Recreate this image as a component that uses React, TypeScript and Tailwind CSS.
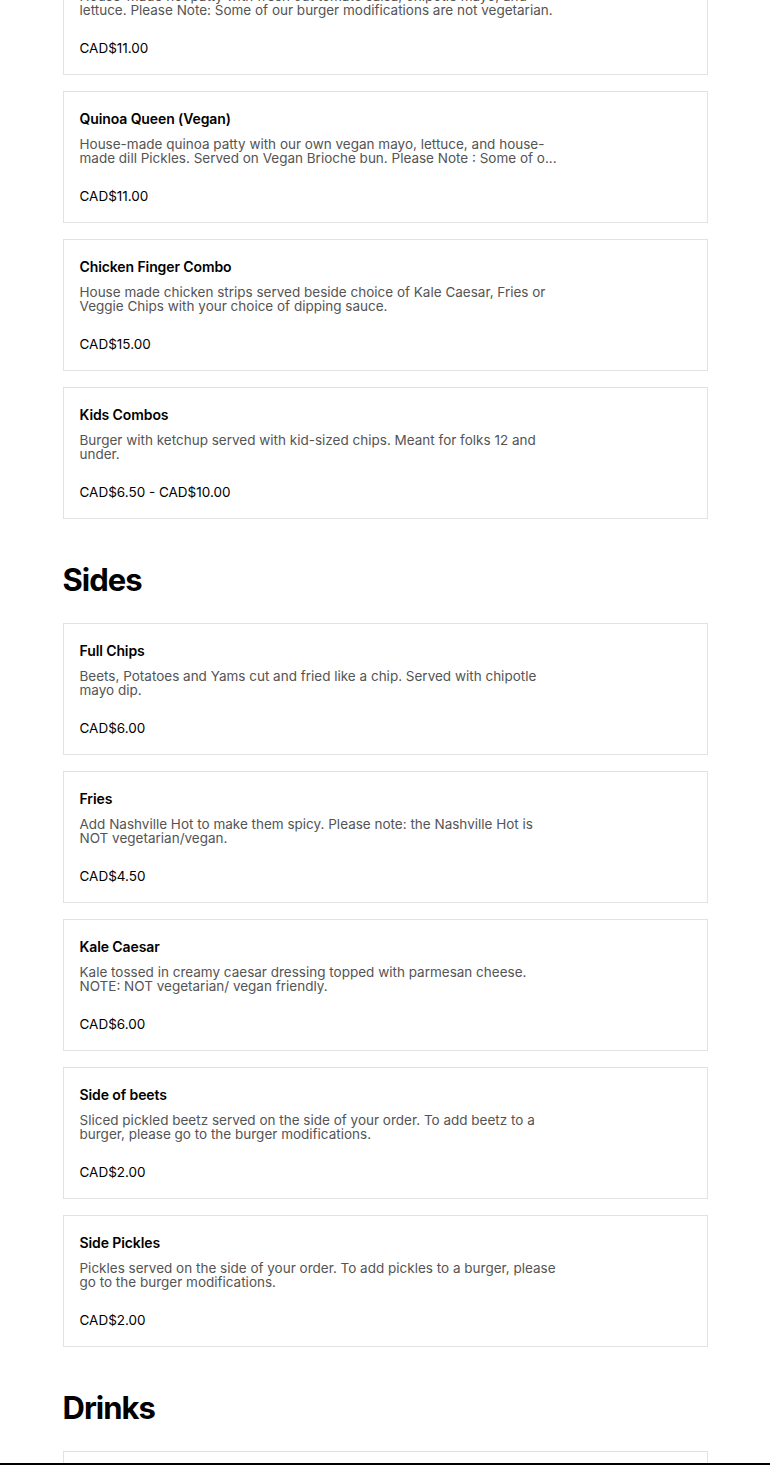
import React from "react";

type Item = { name: string; lines: string[]; price: string };

const burgers: Item[] = [
  {
    name: "Hot Damn Burger",
    lines: [
      "House-made hot patty with fresh cut tomato salsa, chipotle mayo, and",
      "lettuce. Please Note: Some of our burger modifications are not vegetarian.",
    ],
    price: "CAD$11.00",
  },
  {
    name: "Quinoa Queen (Vegan)",
    lines: [
      "House-made quinoa patty with our own vegan mayo, lettuce, and house-",
      "made dill Pickles. Served on Vegan Brioche bun. Please Note : Some of o...",
    ],
    price: "CAD$11.00",
  },
  {
    name: "Chicken Finger Combo",
    lines: [
      "House made chicken strips served beside choice of Kale Caesar, Fries or",
      "Veggie Chips with your choice of dipping sauce.",
    ],
    price: "CAD$15.00",
  },
  {
    name: "Kids Combos",
    lines: ["Burger with ketchup served with kid-sized chips. Meant for folks 12 and", "under."],
    price: "CAD$6.50 - CAD$10.00",
  },
];

const sides: Item[] = [
  {
    name: "Full Chips",
    lines: ["Beets, Potatoes and Yams cut and fried like a chip. Served with chipotle", "mayo dip."],
    price: "CAD$6.00",
  },
  {
    name: "Fries",
    lines: ["Add Nashville Hot to make them spicy. Please note: the Nashville Hot is", "NOT vegetarian/vegan."],
    price: "CAD$4.50",
  },
  {
    name: "Kale Caesar",
    lines: ["Kale tossed in creamy caesar dressing topped with parmesan cheese.", "NOTE: NOT vegetarian/ vegan friendly."],
    price: "CAD$6.00",
  },
  {
    name: "Side of beets",
    lines: [
      "Sliced pickled beetz served on the side of your order. To add beetz to a",
      "burger, please go to the burger modifications.",
    ],
    price: "CAD$2.00",
  },
  {
    name: "Side Pickles",
    lines: [
      "Pickles served on the side of your order. To add pickles to a burger, please",
      "go to the burger modifications.",
    ],
    price: "CAD$2.00",
  },
];

const drinks: Item[] = [
  {
    name: "Soda",
    lines: ["Choice of canned soft drink."],
    price: "CAD$2.00",
  },
];

const MenuCard: React.FC<{ item: Item }> = ({ item }) => (
  <div className="border border-[#e2e2e2] bg-white px-4 py-4 h-[132px]">
    <div className="text-[14px] leading-[22px] font-semibold text-black tracking-[-0.1px]">{item.name}</div>
    <p className="mt-[7px] text-[13.5px] leading-[14px] text-[#545454] whitespace-nowrap">
      {item.lines.map((l) => (
        <span key={l} className="block">
          {l}
        </span>
      ))}
    </p>
    <div className="mt-[21px] text-[13.5px] leading-[20px] text-black">{item.price}</div>
  </div>
);

const Section: React.FC<{ title?: string; items: Item[] }> = ({ title, items }) => (
  <section>
    {title && (
      <h2 className="mt-[41px] mb-[23px] text-[31px] leading-[40px] font-bold text-black tracking-[-1px]">
        {title}
      </h2>
    )}
    <div className="flex flex-col gap-4">
      {items.map((it) => (
        <MenuCard key={it.name} item={it} />
      ))}
    </div>
  </section>
);

export default function App() {
  return (
    <div
      className="min-h-screen bg-white overflow-hidden"
      style={{ fontFamily: "Inter, 'Noto Sans', sans-serif" }}
    >
      <div className="mx-auto w-[645px] -mt-[57px]">
        <Section items={burgers} />
        <Section title="Sides" items={sides} />
        <Section title="Drinks" items={drinks} />
      </div>
      <div className="fixed bottom-0 left-0 right-0 h-[2px] bg-black" />
    </div>
  );
}
